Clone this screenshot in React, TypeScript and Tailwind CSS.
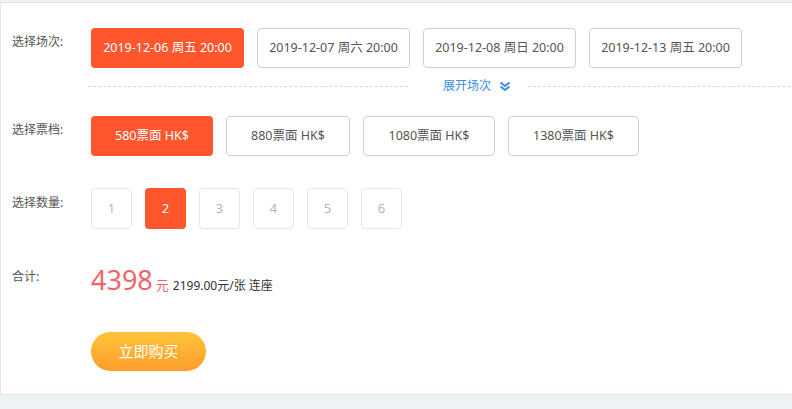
import React, { useState } from "react";

const sessions = [
  { label: "2019-12-06 周五 20:00" },
  { label: "2019-12-07 周六 20:00" },
  { label: "2019-12-08 周日 20:00" },
  { label: "2019-12-13 周五 20:00" },
];

const tiers = [
  { label: "580票面 HK$", w: "w-[122px]" },
  { label: "880票面 HK$", w: "w-[124px]" },
  { label: "1080票面 HK$", w: "w-[132px]" },
  { label: "1380票面 HK$", w: "w-[131px]" },
];

const quantities = [1, 2, 3, 4, 5, 6];

const Label: React.FC<{ children: React.ReactNode; className?: string }> = ({ children, className = "" }) => (
  <div className={`w-[90px] shrink-0 pl-[11px] text-[12px] leading-[16px] text-[#555] ${className}`}>{children}</div>
);

const DoubleChevron = () => (
  <svg width="12" height="10" viewBox="0 0 12 10" fill="none" className="ml-[8px]">
    <path d="M1.5 1.5 L6 5 L10.5 1.5" stroke="#3a8ee6" strokeWidth="2" strokeLinejoin="round" />
    <path d="M1.5 5.5 L6 9 L10.5 5.5" stroke="#3a8ee6" strokeWidth="2" strokeLinejoin="round" />
  </svg>
);

export default function App() {
  const [session, setSession] = useState(0);
  const [tier, setTier] = useState(0);
  const [qty, setQty] = useState(2);

  const unit = 2199;

  return (
    <div
      className="h-[409px] w-[792px] overflow-hidden bg-[#eef2f5] pt-[2px]"
      style={{ fontFamily: '"Noto Sans", "Noto Sans CJK SC", sans-serif' }}
    >
      <div className="h-[393px] w-[900px] border-t border-b border-l border-[#e1e5ea] bg-white">
        {/* sessions */}
        <div className="flex pt-[25px]">
          <Label className="pt-[6px]">选择场次:</Label>
          <div className="flex gap-[13px]">
            {sessions.map((s, i) => (
              <button
                key={i}
                onClick={() => setSession(i)}
                className={`h-[40px] w-[153px] rounded-[4px] text-[12.5px] ${
                  session === i ? "bg-[#ff562e] text-white" : "border border-[#cfcfcf] bg-white text-[#555]"
                }`}
              >
                {s.label}
              </button>
            ))}
          </div>
        </div>

        <div className="mt-[10px] flex items-center pl-[87px]">
          <div className="w-[320px] border-t border-dashed border-[#d9d9d9]" />
          <div className="flex items-center pl-[35px] pr-[17px] text-[12px] leading-[16px] text-[#3a8ee6]">
            展开场次
            <DoubleChevron />
          </div>
          <div className="flex-1 border-t border-dashed border-[#d9d9d9]" />
        </div>

        {/* tiers */}
        <div className="mt-[22px] flex">
          <Label className="pt-[6px]">选择票档:</Label>
          <div className="flex gap-[13px]">
            {tiers.map((t, i) => (
              <button
                key={i}
                onClick={() => setTier(i)}
                className={`h-[40px] ${t.w} rounded-[4px] text-[12.5px] ${
                  tier === i ? "bg-[#ff562e] text-white" : "border border-[#cfcfcf] bg-white text-[#555]"
                }`}
              >
                {t.label}
              </button>
            ))}
          </div>
        </div>

        {/* quantity */}
        <div className="mt-[32px] flex">
          <Label className="pt-[7px]">选择数量:</Label>
          <div className="flex gap-[13px]">
            {quantities.map((q) => (
              <button
                key={q}
                onClick={() => setQty(q)}
                className={`h-[41px] w-[41px] rounded-[4px] text-[13px] ${
                  qty === q ? "bg-[#ff562e] text-white" : "border border-[#e6e6e6] bg-white text-[#b5b5b5]"
                }`}
              >
                {q}
              </button>
            ))}
          </div>
        </div>

        {/* total */}
        <div className="mt-[36px] flex">
          <Label className="pt-[4px]">合计:</Label>
          <div className="flex items-baseline">
            <span className="text-[27px] leading-[30px] text-[#f2636b]">{unit * qty}</span>
            <span className="ml-[3px] text-[13px] text-[#f2636b]">元</span>
            <span className="ml-[4px] text-[12px] text-[#333]">{unit.toFixed(2)}元/张 连座</span>
          </div>
        </div>

        {/* buy */}
        <div className="mt-[36px] pl-[90px]">
          <button className="h-[39px] w-[115px] rounded-full bg-gradient-to-b from-[#ffc43a] to-[#ff9c2c] text-[15px] text-white">
            立即购买
          </button>
        </div>
      </div>
    </div>
  );
}
